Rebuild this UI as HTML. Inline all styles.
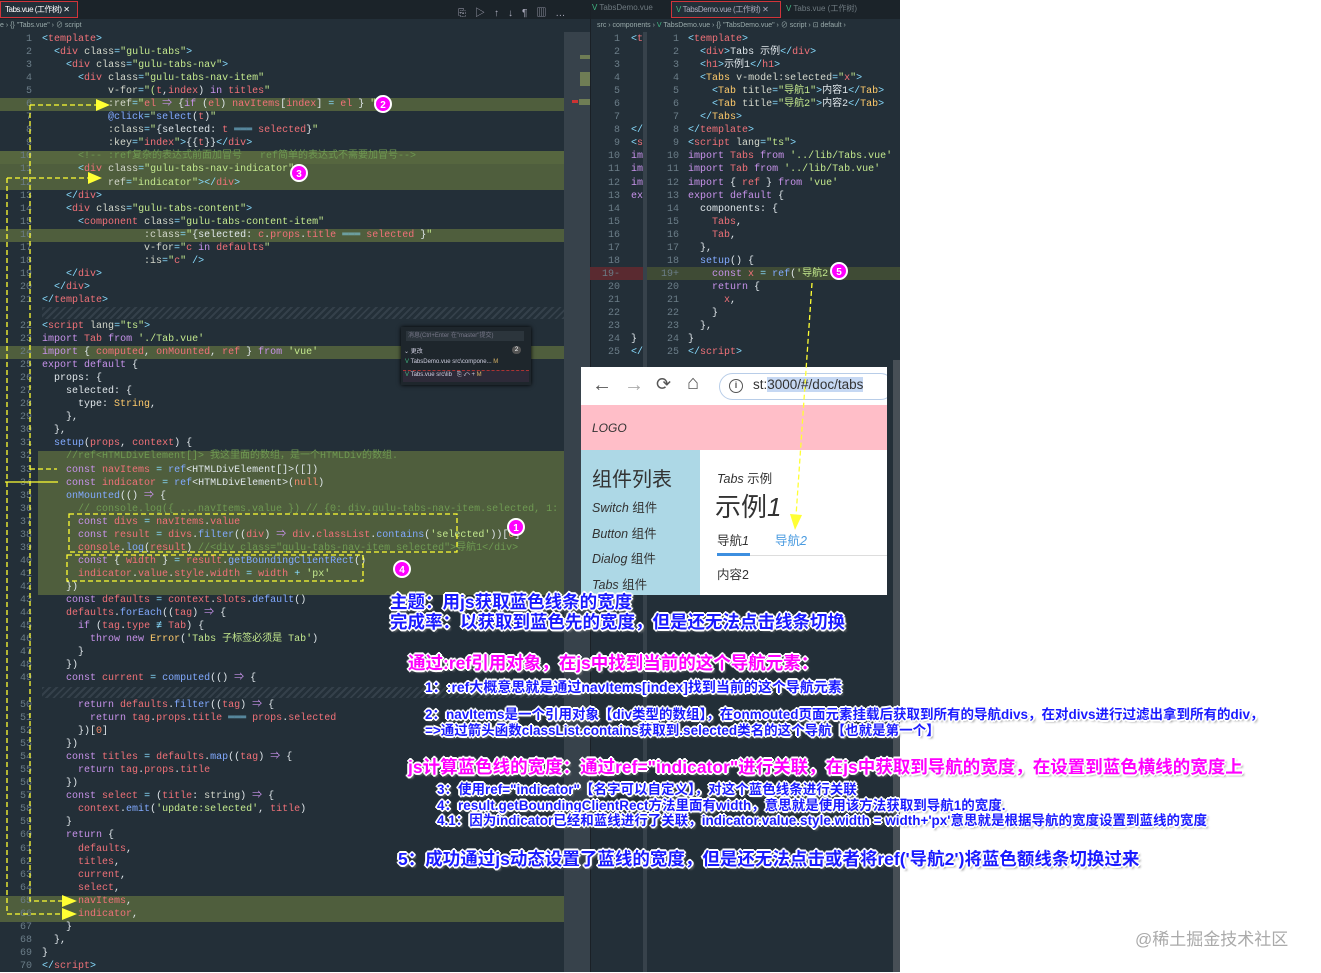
<!DOCTYPE html>
<html><head><meta charset="utf-8"><style>
*{margin:0;padding:0;box-sizing:border-box}
body{width:1321px;height:972px;overflow:hidden;background:#fff;position:relative;font-family:"Liberation Sans","Noto Sans CJK SC",sans-serif}
.abs{position:absolute}
.code{position:absolute;font-family:"Liberation Mono","Noto Sans CJK SC",monospace;font-size:10px;line-height:13.05px;color:#dfe6ea;white-space:pre;overflow:hidden}
.ln{position:absolute;font-family:"Liberation Mono",monospace;font-size:10px;line-height:13.05px;color:#6b7d88;text-align:right;white-space:pre}
.p{color:#89ddff}.t{color:#f07178}.a{color:#d4d8cc}.s{color:#c3e88d}.k{color:#c792ea}.v{color:#f07178}.f{color:#82aaff}.c{color:#6f9a52}.y{color:#ffcb6b}.n{color:#f78c6c}
.hl{position:absolute;background:#4f5e3d}
.hatch{position:absolute;background:repeating-linear-gradient(-45deg,#34404a 0 2px,#232f38 2px 5px)}
.ann{position:absolute;white-space:nowrap;font-family:"Liberation Sans","Noto Sans CJK SC",sans-serif;font-weight:bold;text-shadow:1px 1px 0 #fff,-1px -1px 0 #fff,1px -1px 0 #fff,-1px 1px 0 #fff,2px 0 0 #fff,-2px 0 0 #fff,0 2px 0 #fff,0 -2px 0 #fff,2px 2px 2px #888;transform-origin:0 0}
.b{color:#1a1aff}.m{color:#ff00ff}
</style></head><body>
<div class="abs" style="left:0;top:0;width:900px;height:972px;background:#232f38"></div>
<div class="abs" style="left:0;top:0;width:590px;height:19px;background:#1b2329"></div>
<div class="abs" style="left:590px;top:0;width:310px;height:19px;background:#1b2329"></div>
<div class="abs" style="left:0;top:1px;width:78px;height:17px;border:1px solid #d0343a;background:#232f38;color:#fff;font-size:8px;line-height:15px;padding-left:4px;letter-spacing:-0.5px">Tabs.vue (工作树) ✕</div>
<div class="abs" style="left:0;top:20px;color:#9aa;font-size:7px;line-height:11px">e › {} "Tabs.vue" › ⊘ script</div>
<div class="abs" style="left:458px;top:4px;color:#aab;font-size:10px;letter-spacing:9px">⎘▷↑↓¶▥…</div>
<div class="abs" style="left:564px;top:32px;width:26px;height:940px;background:#37424b"></div>
<div class="abs" style="left:580px;top:55px;width:10px;height:4px;background:#6f7d55"></div>
<div class="abs" style="left:580px;top:72px;width:10px;height:14px;background:#6f7d55"></div>
<div class="abs" style="left:572px;top:100px;width:6px;height:3px;background:#c33"></div>
<div class="abs" style="left:579px;top:99px;width:11px;height:6px;background:#6f7d55"></div>

<div class="hl" style="left:0;top:98px;width:564px;height:13px"></div>
<div class="hl" style="left:0;top:151px;width:564px;height:13px;background:#56663f"></div>
<div class="hl" style="left:0;top:164px;width:564px;height:26px"></div>
<div class="hl" style="left:0;top:229px;width:564px;height:13px"></div>
<div class="hl" style="left:0;top:346px;width:564px;height:13px"></div>
<div class="hl" style="left:38px;top:451px;width:526px;height:144px"></div>
<div class="hl" style="left:0;top:896px;width:564px;height:26px"></div>
<div class="hatch" style="left:42px;top:307px;width:522px;height:12px"></div>
<div class="hatch" style="left:42px;top:687px;width:522px;height:11px"></div>

<div class="ln" style="left:10px;top:33px;width:22px">1
2
3
4
5
6
7
8
9
10
11
12
13
14
15
16
17
18
19
20
21</div>
<div class="ln" style="left:10px;top:320px;width:22px">22
23
24
25
26
27
28
29
30
31
32
33
34
35
36
37
38
39
40
41
42
43
44
45
46
47
48
49</div>
<div class="ln" style="left:10px;top:699px;width:22px">50
51
52
53
54
55
56
57
58
59
60
61
62
63
64
65
66
67
68
69
70</div>

<div class="code" style="left:42px;top:33px;width:522px"><span class="p">&lt;</span><span class="t">template</span><span class="p">&gt;</span>
  <span class="p">&lt;</span><span class="t">div</span> <span class="a">class</span><span class="p">=</span><span class="s">"gulu-tabs"</span><span class="p">&gt;</span>
    <span class="p">&lt;</span><span class="t">div</span> <span class="a">class</span><span class="p">=</span><span class="s">"gulu-tabs-nav"</span><span class="p">&gt;</span>
      <span class="p">&lt;</span><span class="t">div</span> <span class="a">class</span><span class="p">=</span><span class="s">"gulu-tabs-nav-item"</span>
           <span class="a">v-for</span><span class="p">=</span><span class="s">"(</span><span class="v">t</span>,<span class="v">index</span>) <span class="k">in</span> <span class="v">titles</span><span class="s">"</span>
           <span class="a">:ref</span><span class="p">=</span><span class="s">"</span><span class="v">el</span> <span class="k">⇒</span> {<span class="k">if</span> (<span class="v">el</span>) <span class="v">navItems</span>[<span class="v">index</span>] <span class="p">=</span> <span class="v">el</span> } <span class="s">"</span>
           <span class="f">@click</span><span class="p">=</span><span class="s">"</span><span class="f">select</span>(<span class="v">t</span>)<span class="s">"</span>
           <span class="a">:class</span><span class="p">=</span><span class="s">"</span>{selected: <span class="v">t</span> <span class="p">═══</span> <span class="v">selected</span>}<span class="s">"</span>
           <span class="a">:key</span><span class="p">=</span><span class="s">"</span><span class="v">index</span><span class="s">"</span><span class="p">&gt;</span>{{<span class="v">t</span>}}<span class="p">&lt;/</span><span class="t">div</span><span class="p">&gt;</span>
      <span class="c">&lt;!-- :ref复杂的表达式前面加冒号   ref简单的表达式不需要加冒号--&gt;</span>
      <span class="p">&lt;</span><span class="t">div</span> <span class="a">class</span><span class="p">=</span><span class="s">"gulu-tabs-nav-indicator"</span>
           <span class="a">ref</span><span class="p">=</span><span class="s">"indicator"</span><span class="p">&gt;&lt;/</span><span class="t">div</span><span class="p">&gt;</span>
    <span class="p">&lt;/</span><span class="t">div</span><span class="p">&gt;</span>
    <span class="p">&lt;</span><span class="t">div</span> <span class="a">class</span><span class="p">=</span><span class="s">"gulu-tabs-content"</span><span class="p">&gt;</span>
      <span class="p">&lt;</span><span class="t">component</span> <span class="a">class</span><span class="p">=</span><span class="s">"gulu-tabs-content-item"</span>
                 <span class="a">:class</span><span class="p">=</span><span class="s">"</span>{selected: <span class="v">c</span>.<span class="v">props</span>.<span class="v">title</span> <span class="p">═══</span> <span class="v">selected</span> }<span class="s">"</span>
                 <span class="a">v-for</span><span class="p">=</span><span class="s">"</span><span class="v">c</span> <span class="k">in</span> <span class="v">defaults</span><span class="s">"</span>
                 <span class="a">:is</span><span class="p">=</span><span class="s">"</span><span class="v">c</span><span class="s">"</span> <span class="p">/&gt;</span>
    <span class="p">&lt;/</span><span class="t">div</span><span class="p">&gt;</span>
  <span class="p">&lt;/</span><span class="t">div</span><span class="p">&gt;</span>
<span class="p">&lt;/</span><span class="t">template</span><span class="p">&gt;</span></div>

<div class="code" style="left:42px;top:320px;width:522px"><span class="p">&lt;</span><span class="t">script</span> <span class="a">lang</span><span class="p">=</span><span class="s">"ts"</span><span class="p">&gt;</span>
<span class="k">import</span> <span class="v">Tab</span> <span class="k">from</span> <span class="s">'./Tab.vue'</span>
<span class="k">import</span> { <span class="v">computed</span>, <span class="v">onMounted</span>, <span class="v">ref</span> } <span class="k">from</span> <span class="s">'vue'</span>
<span class="k">export default</span> {
  props: {
    selected: {
      type: <span class="y">String</span>,
    },
  },
  <span class="f">setup</span>(<span class="v">props</span>, <span class="v">context</span>) {
    <span class="c">//ref&lt;HTMLDivElement[]&gt; 我这里面的数组，是一个HTMLDiv的数组.</span>
    <span class="k">const</span> <span class="v">navItems</span> <span class="p">=</span> <span class="f">ref</span>&lt;HTMLDivElement[]&gt;([])
    <span class="k">const</span> <span class="v">indicator</span> <span class="p">=</span> <span class="f">ref</span>&lt;HTMLDivElement&gt;(<span class="n">null</span>)
    <span class="f">onMounted</span>(() <span class="k">⇒</span> {
      <span class="c">// console.log({ ...navItems.value }) // {0: div.gulu-tabs-nav-item.selected, 1: div.gulu</span>
      <span class="k">const</span> <span class="v">divs</span> <span class="p">=</span> <span class="v">navItems</span>.<span class="v">value</span>
      <span class="k">const</span> <span class="v">result</span> <span class="p">=</span> <span class="v">divs</span>.<span class="f">filter</span>((<span class="v">div</span>) <span class="k">⇒</span> <span class="v">div</span>.<span class="v">classList</span>.<span class="f">contains</span>(<span class="s">'selected'</span>))[<span class="n">0</span>]
      <span class="v">console</span>.<span class="f">log</span>(<span class="v">result</span>) <span class="c">//&lt;div class="gulu-tabs-nav-item selected"&gt;导航1&lt;/div&gt;</span>
      <span class="k">const</span> { <span class="v">width</span> } <span class="p">=</span> <span class="v">result</span>.<span class="f">getBoundingClientRect</span>()
      <span class="v">indicator</span>.<span class="v">value</span>.<span class="v">style</span>.<span class="v">width</span> <span class="p">=</span> <span class="v">width</span> <span class="p">+</span> <span class="s">'px'</span>
    })
    <span class="k">const</span> <span class="v">defaults</span> <span class="p">=</span> <span class="v">context</span>.<span class="v">slots</span>.<span class="f">default</span>()
    <span class="v">defaults</span>.<span class="f">forEach</span>((<span class="v">tag</span>) <span class="k">⇒</span> {
      <span class="k">if</span> (<span class="v">tag</span>.<span class="v">type</span> <span class="p">≢</span> <span class="v">Tab</span>) {
        <span class="k">throw</span> <span class="k">new</span> <span class="y">Error</span>(<span class="s">'Tabs 子标签必须是 Tab'</span>)
      }
    })
    <span class="k">const</span> <span class="v">current</span> <span class="p">=</span> <span class="f">computed</span>(() <span class="k">⇒</span> {</div>

<div class="code" style="left:42px;top:699px;width:522px">      <span class="k">return</span> <span class="v">defaults</span>.<span class="f">filter</span>((<span class="v">tag</span>) <span class="k">⇒</span> {
        <span class="k">return</span> <span class="v">tag</span>.<span class="v">props</span>.<span class="v">title</span> <span class="p">═══</span> <span class="v">props</span>.<span class="v">selected</span>
      })[<span class="n">0</span>]
    })
    <span class="k">const</span> <span class="v">titles</span> <span class="p">=</span> <span class="v">defaults</span>.<span class="f">map</span>((<span class="v">tag</span>) <span class="k">⇒</span> {
      <span class="k">return</span> <span class="v">tag</span>.<span class="v">props</span>.<span class="v">title</span>
    })
    <span class="k">const</span> <span class="v">select</span> <span class="p">=</span> (<span class="v">title</span>: <span class="a">string</span>) <span class="k">⇒</span> {
      <span class="v">context</span>.<span class="f">emit</span>(<span class="s">'update:selected'</span>, <span class="v">title</span>)
    }
    <span class="k">return</span> {
      <span class="v">defaults</span>,
      <span class="v">titles</span>,
      <span class="v">current</span>,
      <span class="v">select</span>,
      <span class="v">navItems</span>,
      <span class="v">indicator</span>,
    }
  },
}
<span class="p">&lt;/</span><span class="t">script</span><span class="p">&gt;</span></div>

<div class="abs" style="left:401px;top:327px;width:130px;height:58px;background:#1e262c;box-shadow:0 0 4px #000;font-size:6px;color:#ccd"></div>
<div class="abs" style="left:406px;top:331px;width:118px;height:10px;background:#2c353c;font-size:6px;color:#778;line-height:10px;padding-left:2px">消息(Ctrl+Enter 在"master"提交)</div>
<div class="abs" style="left:404px;top:346px;font-size:6px;color:#ccd">⌄ 更改</div>
<div class="abs" style="left:512px;top:346px;width:9px;height:8px;border-radius:4px;background:#555;font-size:6px;color:#fff;text-align:center;line-height:8px">2</div>
<div class="abs" style="left:405px;top:359px;font-size:6px;color:#ccd;white-space:nowrap"><span style="color:#41b883">V</span> TabsDemo.vue src\compone... <span style="color:#d9b366">M</span></div>
<div class="abs" style="left:403px;top:370px;width:126px;height:12px;background:#2d2a38;border-top:1px dashed #a33"></div>
<div class="abs" style="left:405px;top:372px;font-size:6px;color:#ccd;white-space:nowrap"><span style="color:#41b883">V</span> Tabs.vue src\lib &nbsp;&nbsp;⎘ ↶ + <span style="color:#d9b366">M</span></div>

<div class="abs" style="left:590px;top:0;width:1px;height:972px;background:#1a2026"></div>
<div class="abs" style="left:592px;top:3px;font-size:8px;color:#6f7a80;white-space:nowrap"><span style="color:#41b883">V</span> TabsDemo.vue</div>
<div class="abs" style="left:671px;top:1px;width:110px;height:17px;border:1px solid #d0343a;background:#232f38;font-size:8px;color:#aab;line-height:15px;padding-left:4px;white-space:nowrap;letter-spacing:-0.4px"><span style="color:#41b883">V</span> TabsDemo.vue (工作树) ✕</div>
<div class="abs" style="left:786px;top:3px;font-size:8px;color:#6f7a80;white-space:nowrap"><span style="color:#41b883">V</span> Tabs.vue (工作树)</div>
<div class="abs" style="left:597px;top:20px;font-size:7px;color:#9aa;white-space:nowrap;line-height:11px">src › components › <span style="color:#41b883">V</span> TabsDemo.vue › {} "TabsDemo.vue" › ⊘ script › ⊡ default ›</div>
<div class="abs" style="left:590px;top:267px;width:55px;height:13px;background:#5a2a30"></div>
<div class="abs" style="left:646px;top:267px;width:254px;height:13px;background:#3f4b35"></div>
<div class="abs" style="left:643px;top:32px;width:4px;height:940px;background:#37424b"></div>
<div class="ln" style="left:600px;top:33px;width:20px">1
2
3
4
5
6
7
8
9
10
11
12
13
14
15
16
17
18
19-
20
21
22
23
24
25</div>
<div class="code" style="left:631px;top:33px;width:12px;height:330px"><span class="p">&lt;</span><span class="t">t</span>
&#8203;
&#8203;
&#8203;
&#8203;
&#8203;
&#8203;
<span class="p">&lt;/</span>
<span class="p">&lt;</span><span class="t">s</span>
<span class="k">im</span>
<span class="k">im</span>
<span class="k">im</span>
<span class="k">ex</span>
&#8203;
&#8203;
&#8203;
&#8203;
&#8203;
&#8203;
&#8203;
&#8203;
&#8203;
&#8203;
}
<span class="p">&lt;/</span></div>
<div class="ln" style="left:655px;top:33px;width:24px">1
2
3
4
5
6
7
8
9
10
11
12
13
14
15
16
17
18
19+
20
21
22
23
24
25</div>
<div class="code" style="left:688px;top:33px;width:205px"><span class="p">&lt;</span><span class="t">template</span><span class="p">&gt;</span>
  <span class="p">&lt;</span><span class="t">div</span><span class="p">&gt;</span>Tabs 示例<span class="p">&lt;/</span><span class="t">div</span><span class="p">&gt;</span>
  <span class="p">&lt;</span><span class="t">h1</span><span class="p">&gt;</span>示例1<span class="p">&lt;/</span><span class="t">h1</span><span class="p">&gt;</span>
  <span class="p">&lt;</span><span class="y">Tabs</span> <span class="a">v-model:selected</span><span class="p">=</span><span class="s">"</span><span class="v">x</span><span class="s">"</span><span class="p">&gt;</span>
    <span class="p">&lt;</span><span class="y">Tab</span> <span class="a">title</span><span class="p">=</span><span class="s">"导航1"</span><span class="p">&gt;</span>内容1<span class="p">&lt;/</span><span class="y">Tab</span><span class="p">&gt;</span>
    <span class="p">&lt;</span><span class="y">Tab</span> <span class="a">title</span><span class="p">=</span><span class="s">"导航2"</span><span class="p">&gt;</span>内容2<span class="p">&lt;/</span><span class="y">Tab</span><span class="p">&gt;</span>
  <span class="p">&lt;/</span><span class="y">Tabs</span><span class="p">&gt;</span>
<span class="p">&lt;/</span><span class="t">template</span><span class="p">&gt;</span>
<span class="p">&lt;</span><span class="t">script</span> <span class="a">lang</span><span class="p">=</span><span class="s">"ts"</span><span class="p">&gt;</span>
<span class="k">import</span> <span class="v">Tabs</span> <span class="k">from</span> <span class="s">'../lib/Tabs.vue'</span>
<span class="k">import</span> <span class="v">Tab</span> <span class="k">from</span> <span class="s">'../lib/Tab.vue'</span>
<span class="k">import</span> { <span class="v">ref</span> } <span class="k">from</span> <span class="s">'vue'</span>
<span class="k">export default</span> {
  components: {
    <span class="v">Tabs</span>,
    <span class="v">Tab</span>,
  },
  <span class="f">setup</span>() {
    <span class="k">const</span> <span class="v">x</span> <span class="p">=</span> <span class="f">ref</span>(<span class="s">'导航2'</span>)
    <span class="k">return</span> {
      <span class="v">x</span>,
    }
  },
}
<span class="p">&lt;/</span><span class="t">script</span><span class="p">&gt;</span></div>
<div class="abs" style="left:893px;top:360px;width:7px;height:612px;background:#474f56"></div>

<div class="abs" style="left:581px;top:367px;width:306px;height:228px;background:#fff;overflow:hidden">
  <div class="abs" style="left:11px;top:7px;font-size:20px;color:#555">←</div>
  <div class="abs" style="left:43px;top:7px;font-size:20px;color:#aaa">→</div>
  <div class="abs" style="left:75px;top:7px;font-size:18px;color:#555">⟳</div>
  <div class="abs" style="left:106px;top:5px;font-size:20px;color:#555">⌂</div>
  <div class="abs" style="left:138px;top:6px;width:175px;height:27px;border:1px solid #b8cde8;border-radius:14px"></div>
  <div class="abs" style="left:148px;top:12px;width:14px;height:14px;border:1.5px solid #555;border-radius:50%;font-size:9px;text-align:center;line-height:11px;color:#555;font-weight:bold">i</div>
  <div class="abs" style="left:172px;top:10px;font-size:13.5px;color:#333;white-space:nowrap">st:<span style="background:#c6d8f3">3000/#/doc/tabs</span></div>
  <div class="abs" style="left:0;top:38px;width:306px;height:45px;background:#ffbec8"></div>
  <div class="abs" style="left:11px;top:54px;font-size:12px;font-style:italic;color:#333">LOGO</div>
  <div class="abs" style="left:0;top:83px;width:119px;height:145px;background:#add8e6"></div>
  <div class="abs" style="left:11px;top:96px;font-size:20px;color:#333;white-space:nowrap">组件列表</div>
  <div class="abs" style="left:11px;top:130px;font-size:12.5px;color:#333;white-space:nowrap"><i>Switch</i> 组件</div>
  <div class="abs" style="left:11px;top:156px;font-size:12.5px;color:#333;white-space:nowrap"><i>Button</i> 组件</div>
  <div class="abs" style="left:11px;top:181px;font-size:12.5px;color:#333;white-space:nowrap"><i>Dialog</i> 组件</div>
  <div class="abs" style="left:11px;top:207px;font-size:12.5px;color:#333;white-space:nowrap"><i>Tabs</i> 组件</div>
  <div class="abs" style="left:136px;top:101px;font-size:12.5px;color:#333;white-space:nowrap"><i>Tabs</i> 示例</div>
  <div class="abs" style="left:134px;top:120px;font-size:26px;color:#333;white-space:nowrap">示例<i>1</i></div>
  <div class="abs" style="left:136px;top:163px;font-size:12.5px;color:#333;white-space:nowrap">导航<i>1</i></div>
  <div class="abs" style="left:194px;top:163px;font-size:12.5px;color:#4a9be0;white-space:nowrap">导航<i>2</i></div>
  <div class="abs" style="left:136px;top:188px;width:170px;height:1px;background:#ddd"></div>
  <div class="abs" style="left:136px;top:186px;width:33px;height:3px;background:#3d8fe0"></div>
  <div class="abs" style="left:136px;top:197px;font-size:12.5px;color:#333;white-space:nowrap">内容2</div>
</div>

<svg class="abs" style="left:0;top:0" width="1321" height="972">
 <g stroke="#ffff33" stroke-width="1.3" fill="none" stroke-dasharray="5,3">
  <path d="M30 105 H98 M30 105 V901 H66"/>
  <path d="M7 178 H90 M7 178 V914 H66"/>
  <path d="M30 469 H57"/>
  <rect x="69" y="514" width="388" height="38"/>
  <rect x="67" y="555" width="296" height="26"/>
  <path d="M812 283 L796 516"/>
 </g>
 <path d="M5 482 H58" stroke="#ffff33" stroke-width="1.2"/>
 <g fill="#ffff33">
  <path d="M96 99 L110 105 L96 111 Z"/>
  <path d="M88 172 L102 178 L88 184 Z"/>
  <path d="M62 895 L77 901 L62 907 Z"/>
  <path d="M62 908 L77 914 L62 920 Z"/>
  <path d="M790 514 L795 530 L802 515 Z"/>
 </g>
 <g stroke="#fff" stroke-width="2" fill="#ff00ff">
  <circle cx="516" cy="527" r="8"/><circle cx="383" cy="104" r="8"/><circle cx="299" cy="173" r="8"/><circle cx="402" cy="569" r="8"/><circle cx="839" cy="271" r="8"/>
 </g>
 <g fill="#fff" font-family="Liberation Sans" font-weight="bold" font-size="10" text-anchor="middle">
  <text x="516" y="531">1</text><text x="383" y="108">2</text><text x="299" y="177">3</text><text x="402" y="573">4</text><text x="839" y="275">5</text>
 </g>
</svg>

<div class="ann b" style="left:390px;top:592px;font-size:17.5px;line-height:20px">主题：用js获取蓝色线条的宽度<br>完成率：以获取到蓝色先的宽度，但是还无法点击线条切换</div>
<div class="ann m" style="left:408px;top:650px;font-size:17.5px">通过:ref引用对象，在js中找到当前的这个导航元素：</div>
<div class="ann b" style="left:425px;top:677px;font-size:14px">1：:ref大概意思就是通过navItems[index]找到当前的这个导航元素</div>
<div class="ann b" style="left:425px;top:707px;font-size:13.5px;line-height:16px">2：navItems是一个引用对象【div类型的数组】，在onmouted页面元素挂载后获取到所有的导航divs，在对divs进行过滤出拿到所有的div，<br>=&gt;通过箭头函数classList.contains获取到.selected类名的这个导航【也就是第一个】</div>
<div class="ann m" style="left:408px;top:754px;font-size:17.5px">js计算蓝色线的宽度：通过ref="indicator"进行关联，在js中获取到导航的宽度，在设置到蓝色横线的宽度上</div>
<div class="ann b" style="left:437px;top:782px;font-size:13.5px;line-height:15.5px">3：使用ref="indicator"【名字可以自定义】，对这个蓝色线条进行关联<br>4：result.getBoundingClientRect方法里面有width，意思就是使用该方法获取到导航1的宽度.<br>4.1：因为indicator已经和蓝线进行了关联，indicator.value.style.width = width+'px'意思就是根据导航的宽度设置到蓝线的宽度</div>
<div class="ann b" style="left:398px;top:846px;font-size:17.5px">5：成功通过js动态设置了蓝线的宽度，但是还无法点击或者将ref('导航2')将蓝色额线条切换过来</div>

<div class="abs" style="left:1135px;top:925px;font-size:17px;color:#aaa;white-space:nowrap">@稀土掘金技术社区</div>
</body></html>
